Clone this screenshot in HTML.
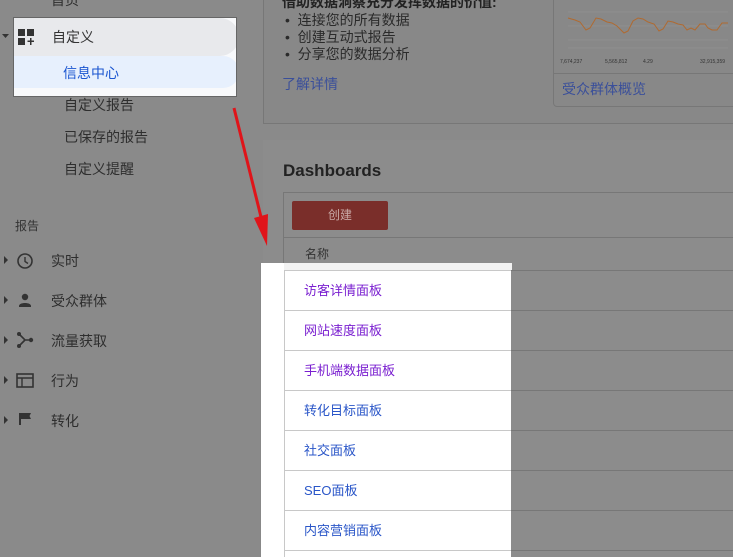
<!DOCTYPE html>
<html style="width:733px;height:557px;overflow:hidden"><head><meta charset="utf-8"><style>
*{margin:0;padding:0;box-sizing:border-box}
body{width:733px;height:557px;overflow:hidden;background:#8a8a8a;font-family:"Liberation Sans","Noto Sans CJK SC",sans-serif;position:relative;color:#2a2a2a}
.a{position:absolute}
.side{font-size:14px;color:#2e2e2e}
.lk{color:#3a4f9a}
.row{position:absolute;left:284px;width:227px;height:40px;border-top:1px solid #c8c8c8;font-size:13px;padding:9px 0 0 20px}
</style></head><body>
<div class="a" style="left:263px;top:-2px;width:480px;height:126px;border:1px solid #777;background:#888"></div>
<div class="a" style="left:282px;top:-8px;font-size:14px;font-weight:bold;color:#222">借助数据洞察充分发挥数据的价值:</div>
<div class="a" style="left:285px;top:12px;font-size:14px;line-height:17px;color:#2a2a2a">• &nbsp;连接您的所有数据<br>• &nbsp;创建互动式报告<br>• &nbsp;分享您的数据分析</div>
<div class="a lk" style="left:282px;top:74px;font-size:14px">了解详情</div>
<div class="a" style="left:553px;top:-4px;width:190px;height:111px;border:1px solid #777;border-radius:4px;background:#888"></div>
<div class="a" style="left:553px;top:73px;width:190px;height:1px;background:#777"></div>
<svg class="a" style="left:560px;top:6px" width="170" height="70"><g stroke="#999" stroke-width=".4"><line x1="8" y1="6" x2="168" y2="6"/><line x1="8" y1="20" x2="168" y2="20"/><line x1="8" y1="34" x2="168" y2="34"/><line x1="8" y1="42" x2="168" y2="42"/></g><polyline fill="none" stroke="#b06a30" stroke-width="1" points="8,12 15,14 20,16 26,24 30,22 36,12 41,13 47,16 52,17 57,20 61,24 64,27 68,25 73,15 78,12 83,13 88,16 94,18 99,25 103,23 108,15 113,16 118,18 123,19 127,24 131,22 135,24 140,18 145,18 148,22 152,24 157,24 162,17 168,17"/><text x="0" y="57" font-size="5" fill="#333">7,674,237</text><text x="45" y="57" font-size="5" fill="#333">5,565,812</text><text x="83" y="57" font-size="5" fill="#333">4.29</text><text x="140" y="57" font-size="5" fill="#333">32,915,359</text></svg>
<div class="a lk" style="left:562px;top:79px;font-size:14px">受众群体概览</div>
<div class="a" style="left:263px;top:140px;width:480px;height:420px;background:#8c8c8c"></div>
<div class="a" style="left:283px;top:161px;font-size:17px;font-weight:bold;color:#222">Dashboards</div>
<div class="a" style="left:283px;top:192px;width:460px;height:370px;border-left:1px solid #777;border-top:1px solid #777"></div>
<div class="a" style="left:292px;top:201px;width:96px;height:29px;background:#7a2e2a;border-radius:2px;color:#c9a9a6;font-size:12px;text-align:center;line-height:29px">创建</div>
<div class="a" style="left:283px;top:237px;width:460px;height:1px;background:#777"></div>
<div class="a" style="left:305px;top:245px;font-size:12px;color:#333">名称</div>
<div class="a" style="left:283px;top:270px;width:460px;height:1px;background:#777"></div>
<div class="a" style="left:511px;top:310px;width:230px;height:1px;background:#777"></div>
<div class="a" style="left:511px;top:350px;width:230px;height:1px;background:#777"></div>
<div class="a" style="left:511px;top:390px;width:230px;height:1px;background:#777"></div>
<div class="a" style="left:511px;top:430px;width:230px;height:1px;background:#777"></div>
<div class="a" style="left:511px;top:470px;width:230px;height:1px;background:#777"></div>
<div class="a" style="left:511px;top:510px;width:230px;height:1px;background:#777"></div>
<div class="a" style="left:511px;top:550px;width:230px;height:1px;background:#777"></div>
<div class="a" style="left:0;top:-10px;width:262px;height:567px;background:#8a8a8a"></div>
<div class="a side" style="left:51px;top:-10px">首页</div>
<div class="a side" style="left:64px;top:95px">自定义报告</div>
<div class="a side" style="left:64px;top:127px">已保存的报告</div>
<div class="a side" style="left:64px;top:159px">自定义提醒</div>
<div class="a" style="left:15px;top:217px;font-size:12px;color:#333">报告</div>
<div class="a side" style="left:51px;top:251px">实时</div>
<div class="a side" style="left:51px;top:291px">受众群体</div>
<div class="a side" style="left:51px;top:331px">流量获取</div>
<div class="a side" style="left:51px;top:371px">行为</div>
<div class="a side" style="left:51px;top:411px">转化</div>
<svg class="a" style="left:0;top:250px" width="40" height="180" fill="#333">
<path d="M4 6l4 4-4 4z M4 46l4 4-4 4z M4 86l4 4-4 4z M4 126l4 4-4 4z M4 166l4 4-4 4z"/>
<circle cx="25" cy="11" r="7" fill="none" stroke="#333" stroke-width="1.6"/><path d="M25 7v4.5l3 2" fill="none" stroke="#333" stroke-width="1.4"/>
<circle cx="25" cy="47" r="3.2"/><path d="M19 56c0-4 12-4 12 0v1H19z"/>
<circle cx="19" cy="84" r="2"/><circle cx="19" cy="96" r="2"/><circle cx="31" cy="90" r="2.2"/><path d="M19 84l6 6h6M19 96l6-6" fill="none" stroke="#333" stroke-width="1.6"/>
<rect x="17" y="124" width="16" height="13" fill="none" stroke="#333" stroke-width="1.6"/><path d="M17 128h16M22 128v9" stroke="#333" stroke-width="1.4"/>
<path d="M19 163h12l-1.5 3 1.5 3h-10v6h-2z"/></svg>
<div class="a" style="left:13px;top:17px;width:224px;height:80px;border:1px solid #666;background:#f8f9fb;overflow:hidden">
<div class="a" style="left:0;top:0;width:225px;height:38px;background:#e8e9ec;border-radius:0 19px 19px 0"></div>
<div class="a" style="left:0;top:38px;width:225px;height:32px;background:#e7f0fd;border-radius:0 16px 16px 0"></div>
<svg class="a" style="left:4px;top:11px" width="16" height="16" fill="#333"><rect x="0" y="0" width="7" height="7"/><rect x="9" y="0" width="7" height="7"/><rect x="0" y="9" width="7" height="7"/><path d="M12 9h1.5v2.5H16V13h-2.5v3H12v-3H9.5v-1.5H12z"/></svg>
<div class="a" style="left:38px;top:9px;font-size:14px;color:#333">自定义</div>
<div class="a" style="left:49px;top:45px;font-size:14px;color:#1a55d0">信息中心</div>
</div>
<svg class="a" style="left:0;top:30px" width="12" height="12"><path d="M2 4h7l-3.5 4z" fill="#333"/></svg>
<svg class="a" style="left:225px;top:100px" width="60" height="150"><line x1="9" y1="8" x2="38" y2="125" stroke="#e0141a" stroke-width="3"/><path d="M29 118l14-4-1 32z" fill="#e0141a"/></svg>
<div class="a" style="left:260px;top:263px;width:251px;height:294px;background:#fff;border-left:1px solid #888">
<div class="a" style="left:23px;top:0;width:228px;height:7px;background:#f2f2f2"></div>
</div>
<div class="row" style="top:270px;color:#7a1fd0">访客详情面板</div>
<div class="row" style="top:310px;color:#7a1fd0">网站速度面板</div>
<div class="row" style="top:350px;color:#7a1fd0">手机端数据面板</div>
<div class="row" style="top:390px;color:#2a56c8">转化目标面板</div>
<div class="row" style="top:430px;color:#2a56c8">社交面板</div>
<div class="row" style="top:470px;color:#2a56c8">SEO面板</div>
<div class="row" style="top:510px;color:#2a56c8">内容营销面板</div>
<div class="row" style="top:550px;height:7px"></div>
<div class="a" style="left:284px;top:270px;width:1px;height:287px;background:#c8c8c8"></div>
</body></html>
